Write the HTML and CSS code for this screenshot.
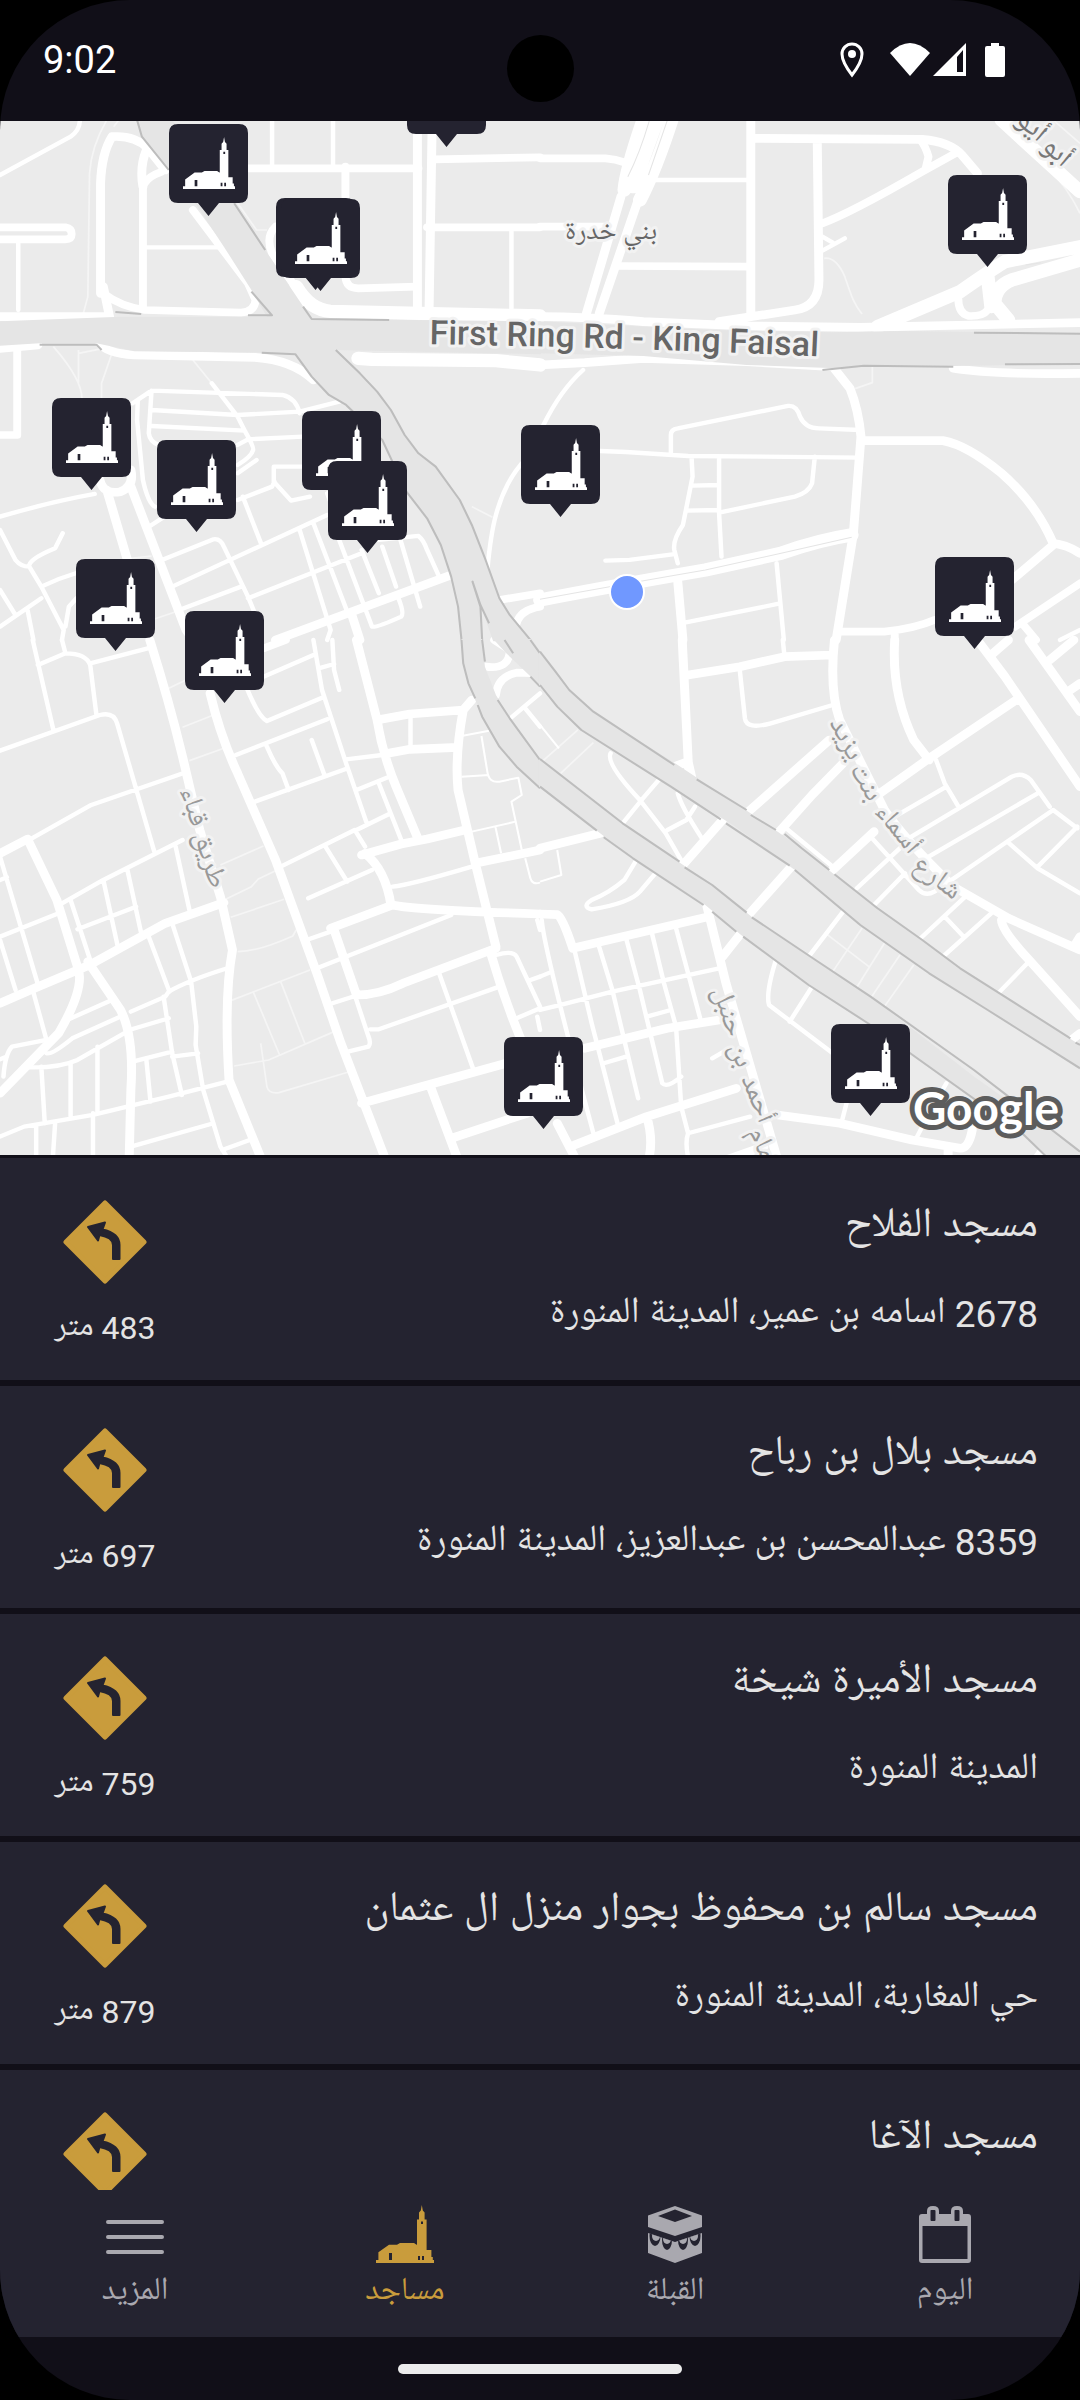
FILE: index.html
```html
<!DOCTYPE html>
<html lang="ar" dir="rtl">
<head>
<meta charset="utf-8">
<meta name="viewport" content="width=device-width, initial-scale=1">
<title>مساجد</title>
<link rel="stylesheet" href="styles.css">
</head>
<body>
<svg class="sprite" aria-hidden="true">
  <symbol id="mosque" viewBox="0 0 58 58">
    <path fill="currentColor" fill-rule="evenodd" d="M0 58V55H2.400V47.300L13 39.700H21L24 38H38L40.600 39.700H41V14.500H43V7.500L44.800 5.500L45.800 0L46.800 5.500L48.600 7.500V14.500H50.600V45H55.400V52H56.800V55H58V58ZM13 48V55H16V48ZM42 51V55H44V51ZM46 51V55H48V51ZM45 16.500V19H47V16.500Z"/>
  </symbol>
  <symbol id="turn" viewBox="0 0 84 84">
    <path class="sign" d="M42 3L81 42L42 81L3 42Z"/>
    <path class="arrow" d="M25 27L42 22.500L39.500 29.500C51 32 56.500 37 56.500 45V59H50V45C50 40 45 36.500 36.500 35L35 40.500Z"/>
  </symbol>
  <symbol id="pin" viewBox="0 0 79 92">
    <path fill="#242330" d="M9 0H70Q79 0 79 9V70Q79 79 70 79H50L39.500 92L29 79H9Q0 79 0 70V9Q0 0 9 0Z"/>
    <use href="#mosque" x="14" y="13" width="52" height="52"/>
  </symbol>
</svg>

<div class="screen">
  <header class="status" dir="ltr">
    <time class="clock">9:02</time>
    <span class="camera"></span>
    <svg class="status-icons" viewBox="0 0 166 36" aria-hidden="true">
      <path fill="none" stroke="#fff" stroke-width="3" d="M12 33Q2 20 2 12A10 10 0 0 1 22 12Q22 20 12 33Z"/>
      <circle cx="12" cy="12" r="4" fill="#fff"/>
      <path fill="#fff" d="M50 11Q70 -9 90 11L70 34Z"/>
      <path fill="#fff" fill-rule="evenodd" d="M93 34L126 1V34ZM117 15V30H123V8Z"/>
      <path fill="#fff" d="M151 1H159V4H163Q165 4 165 6V33Q165 35 163 35H147Q145 35 145 33V6Q145 4 147 4H151Z"/>
    </svg>
  </header>

  <main class="content">
    <svg class="map" viewBox="0 0 1080 1034" role="img" aria-label="خريطة المساجد">
      <rect width="1080" height="1034" fill="#ebebeb"/>

      <!-- Footpaths -->
      <g class="paths">
        <g transform="translate(0 -1) scale(.3444 .3333)">
          <path d="M310 0Q265 80 260 160L255 530L242 580M345 0L330 20M155 680Q240 780 238 840M228 690V790M325 700L295 790V840M228 700L300 685M560 720L615 790M690 250L745 330H775M1370 1160L1430 1192M440 1500L540 1465M380 1315L440 1308"/>
        </g>
        <g transform="translate(540 -1) scale(.3444 .3333)">
          <path d="M825 415Q860 410 885 470C905 530 910 550 935 582M965 740V788L915 806M1480 150Q1530 200 1568 280M1490 0L1568 70"/>
        </g>
        <g transform="translate(0 519) scale(.3444 .3333)">
          <path d="M490 145L540 120M530 262L620 225M550 362L650 325M640 675L765 618M655 778L730 740L750 717L805 690M670 832L825 778M690 935Q750 935 850 888L860 870M670 1082L900 990M735 1055L812 1245M815 1025L885 1210M680 1278L780 1260L970 1175M757 1210L775 1340Q780 1362 810 1358L1010 1297"/>
          <path class="lane" d="M1340 288L1420 272M1398 288L1415 395Q1420 430 1450 425L1505 413L1515 465L1485 485L1515 630M1340 410L1420 405M1370 575L1497 545M1438 558L1455 640M1525 655L1540 715Q1545 735 1568 728"/>
        </g>
        <g transform="translate(540 519) scale(.3444 .3333)">
          <path d="M0 370L110 270M60 400L155 308M835 885L955 980M850 995L935 865M918 1045L1000 910M960 1075L1045 945M1000 1100L1085 975"/>
          <path class="lane" d="M0 255L55 325M50 630L62 705L0 725"/>
        </g>
      </g>

      <!-- Streets -->
      <g class="roads">
        <g transform="translate(0 -1) scale(.3444 .3333)">
          <path class="s" d="M0 165L205 50Q232 30 232 0M53 360V570M790 0V140M967 0V140M1485 330V565M420 382H650M0 1190Q150 1145 275 1122M0 1230L45 1320Q60 1340 85 1340L120 1400L185 1530L180 1560M85 1335Q90 1315 160 1285L182 1240M120 1400Q170 1375 220 1360M0 1520L120 1435M0 1410L42 1480M80 1470L97 1560M190 1520L200 1460L222 1435M385 850L440 812L820 825Q860 835 870 880M440 812L432 940Q435 965 460 975M440 870L690 885L870 875L985 845M440 918L710 932M615 790L690 890L712 935Q740 985 735 990Q730 1010 690 1035M690 975L720 958L880 950M690 1060L745 1020M795 1040H880M795 1040V1085L845 1142L900 1130M430 1222L500 1175M690 1140L790 1100L797 1085M705 1130L757 1268M400 840L398 900L415 1080Q430 1150 450 1160M470 1320L620 1258Q640 1255 650 1280L720 1430L740 1480M500 1400L950 1185M520 1470L700 1400M720 1435L1050 1300M870 1230L960 1530L950 1560M910 1210L1010 1480M985 1260L1080 1520Q1090 1525 1165 1490Q1175 1480 1155 1430M1050 1290L1100 1420M1110 1280L1150 1400M1160 1250L1220 1460M950 1120L975 1190M1100 1260L1215 1248Q1230 1260 1240 1290L1275 1370M1415 1350Q1425 1240 1440 1185Q1465 1090 1515 1030"/>
          <path class="m" d="M700 145H1215M1260 118L1568 112M1240 322H1568M1003 140V230M1003 470Q1005 505 1040 505L1210 500M50 680V945H0M0 322H190Q208 325 208 342Q208 358 190 358H0M415 190V560M300 520Q350 560 420 570L700 578Q740 575 742 540L720 490L560 270M420 190Q430 170 470 155M800 320Q770 350 790 400L850 490M1450 1440L1568 1420M1500 1510Q1510 1470 1568 1460"/>
          <path class="l" d="M292 520V190Q295 100 325 50Q390 45 430 85L480 150M415 200Q405 140 425 90M1212 0V560M1255 0L1246 560M300 500L320 600M290 670Q310 700 390 705L740 712Q850 720 910 780M290 1080Q300 1125 350 1115Q390 1100 380 1050M310 1110L370 1320M380 1100L540 1530L560 1560M800 1560L1310 1365M1020 1480L1045 1560M0 590L300 590M0 685L110 675"/>
          <path class="xl" d="M860 500Q900 570 960 574L1568 588M1040 715L1080 718L1440 722L1568 735"/>
        </g>
        <g transform="translate(540 -1) scale(.3444 .3333)">
          <path class="s" d="M335 180H610M380 1000V945Q380 928 400 925L720 858Q745 855 755 890Q770 925 810 925L930 930M175 993L250 996L430 1008L930 1013M440 1010L443 1070L415 1215Q385 1260 390 1290L400 1330M520 1010V1180L527 1310M443 1097L520 1095M425 1172L520 1170M520 1178L740 1130Q780 1118 790 1090L798 1010M190 1322L260 1320L385 1303M687 1330L708 1560M420 1508L690 1452M10 915Q60 810 125 750M820 350L850 368M820 392L885 355M1510 1560L1568 1530"/>
          <path class="m" d="M0 115H190Q220 117 245 127M0 320H200M225 438L610 440M820 310Q900 280 1110 155L1215 95M1105 60Q1120 80 1128 110L1120 145M870 1535H1000Q1090 1525 1145 1500M1030 1540V1560M1215 520Q1210 580 1245 588Q1285 590 1300 570M1380 1520L1568 1390M1400 1510L1440 1560"/>
          <path class="l" d="M612 0V580M620 55L1110 58Q1190 65 1225 105L1270 160M805 60L810 480Q810 560 740 570L520 605M0 590Q130 590 300 605L600 618L930 622L1568 608M0 735L130 728L300 715L600 725L850 740M850 740L900 805Q925 870 932 950L910 1240L860 1560M935 962L1170 962Q1240 975 1340 1060Q1440 1150 1490 1270M1490 1270Q1530 1275 1568 1300M1490 1275L1370 1380M400 1385L415 1560M1200 745Q1320 765 1568 760M235 230L135 580M285 240L172 580"/>
          <path class="xl" d="M300 0Q250 150 245 210M382 0Q335 150 290 240M0 1440Q200 1400 480 1350L700 1300Q810 1260 905 1245M340 0L270 200M980 620L1220 515Q1310 450 1350 425L1568 380M1568 420L1370 480Q1320 500 1320 550L1360 600M1300 470L1310 560M1340 0L1568 215"/>
        </g>
        <g transform="translate(0 519) scale(.3444 .3333)">
          <path class="s" d="M95 0L155 270M180 0L190 40M110 75L190 40Q250 40 262 75L280 225M262 70L440 22M0 332L290 225Q330 215 340 250L448 635M90 597L265 495L540 397M180 790L300 720L530 600M300 720L342 920M370 690L410 880M225 868L395 800M510 620L550 810M0 720L20 712M0 650L112 1040M0 890L165 822M0 900L45 1050M205 780L265 970M500 850L555 1025L570 1160L568 1215L590 1350L640 1520L655 1545M430 885L492 1055M195 1140L325 1080M380 1115L480 1070L490 1055Q550 1020 660 985M475 1070L500 1240L528 1365M375 1170L490 1135M385 1265L500 1235M500 1250L575 1240M425 1260L437 1385M0 1490L70 1460L270 1425L490 1370L660 1325M95 1050L135 1200L35 1220Q15 1240 10 1310M0 1258L20 1250M135 1240Q150 1245 210 1195L360 1125M80 1282Q170 1285 225 1260L360 1180M120 1280L130 1450M205 1270V1430M283 1220V1420M105 1455V1560M160 1450L153 1560M270 1420V1560M380 1520L620 1450M645 1530L725 1500M715 140Q750 230 775 243L935 173M765 110L910 45M910 0L935 150L1005 370L1065 550M965 0L970 90L985 150M925 85L970 72M685 345L950 238M740 485L1010 385M775 320Q800 380 820 400L838 450M905 300L942 405M1005 358L1110 345M1035 450L1130 410M1100 430L1165 600M1035 570L1130 522M815 680L1030 570L1060 620M945 620L1008 725M895 775L1080 690M890 900L960 875M920 985L1310 825M965 1090L1040 1065M1010 1235L1070 1220Q1078 1210 1070 1190L1030 1065M1075 1168H1100L1450 1040M1275 1000L1375 1290M1192 230V320M1140 740Q1190 735 1370 680M1440 945Q1490 930 1500 950L1568 1100M1500 1135L1568 1105M1540 1020L1568 1010M1560 1130L1568 1170M1560 840L1568 870M1485 232L1568 160M1525 205L1568 260"/>
          <path class="l" d="M435 0Q490 180 530 350L580 570L640 770L675 930Q650 1070 665 1320L760 1560M0 640L80 597L165 780L225 980Q250 1040 170 1180L0 1360M0 1090L100 1045L260 975L480 850L650 788M255 965L350 1110Q390 1190 380 1350L375 1560M610 160Q640 290 690 400L800 660L920 1000L990 1210L1120 1560M1035 0L1095 240Q1110 340 1150 440L1215 600M1095 240L1190 222L1345 210L1370 180M1345 210Q1320 350 1330 450L1380 670L1440 920L1425 940M1115 342L1190 328L1330 322M1050 645L1165 612L1240 597L1350 570M1060 640Q1120 690 1135 795M960 865L1140 795Q1200 810 1568 822M970 870L1035 1065Q1100 1065 1170 1030L1440 925M1425 940Q1470 1100 1530 1240M1050 1390L1470 1270M1250 1340L1330 1560M1310 1495L1530 1420M1380 670L1568 630"/>
          <path class="m" d="M1440 165Q1445 110 1500 98L1568 100M1435 0L1480 30Q1480 90 1410 80M765 25L830 0M1520 0L1568 50"/>
        </g>
        <g transform="translate(540 519) scale(.3444 .3333)">
          <path class="s" d="M705 0L710 50M580 90L595 235Q600 270 670 250L850 195M205 340Q190 370 290 480L365 580L415 670M240 550L295 480L345 420M400 460Q410 500 470 595M370 570L425 540L450 500M280 660L245 720Q200 760 150 780Q120 800 150 808Q260 790 290 755L335 700M715 565L850 680M920 745L1050 620M970 795L1060 700M1105 895L1235 770M1170 950L1310 820M1175 830L1230 890M960 590L1100 750Q1120 770 1145 755L1490 510L1560 565M1030 530L1180 440M1150 360L1175 430L1215 500M1070 595L1370 410Q1400 395 1425 420L1480 500M1120 655L1445 460M1445 680L1560 560M1360 608L1445 685L1568 760M1335 1055L1415 970M685 960Q655 1060 665 1095L850 1240M725 1145L790 1040M780 950L880 815M875 1450L890 1390M1095 1490L1130 1420L1180 1330M0 1110L60 1095L210 1055L520 985M0 1010L35 995M5 840Q10 920 155 1480M100 930L150 1150L225 1450M170 915L210 1050L285 1375M250 895L290 1050L355 1330Q370 1345 410 1310M325 880L360 1030L395 1160L410 1400L430 1480M395 865L465 1135M310 1130L380 1110M185 1270L250 1250M500 1255L550 1225M430 1480L610 1430M430 1480Q420 1510 432 1560"/>
          <path class="l" d="M413 0L432 400M430 105L580 80L710 50L850 45M855 0Q840 150 870 240L1000 510Q1060 600 1200 740L1360 835L1568 930M1030 0Q1020 160 1085 300L1130 360M980 465L1130 355L1390 175M605 515L840 300M695 575L790 465L880 370M845 695L970 575M530 540L415 675M730 680L605 825M1270 0L1350 110L1568 440M1310 45L1360 0M1420 0L1568 215M1480 60L1550 0M1540 150L1568 130M1340 840Q1340 870 1420 960L1568 1130M1550 920L1568 890M0 625L175 580M0 822L50 824Q65 830 95 925L490 830M485 800L540 1030L690 1560M530 950L580 885M130 1225L370 1165L520 1140M50 1450L100 1550M100 1515L310 1430L570 1345M310 1430Q330 1500 315 1560M690 1425L870 1450L1080 1500L1220 1525Q1245 1525 1255 1470M540 1560L650 1520M1530 1210L1568 1180M390 380L430 365L440 410M1440 1560L1460 1530M1185 1530V1560"/>
        </g>
      </g>

      <!-- Highways -->
      <g class="highways">
        <g transform="translate(0 -1) scale(.3444 .3333)">
          <path class="fill" d="M398 -10L412 50L490 150L570 255L650 380L730 510L775 590H350L0 604V677L115 670H280L390 694L760 698L858 703L905 770L955 825L1005 855L1110 960L1180 1115L1240 1195L1280 1275L1310 1370L1330 1460L1340 1564H1400L1395 1460L1372 1385L1395 1455L1432 1564H1544L1480 1485L1450 1435L1410 1320L1370 1215L1335 1140L1265 1040L1215 1000L1175 945L1135 870L1095 815L1045 760L975 690L1570 703V604L905 597L770 390L680 250L500 0Z"/>
          <path class="edge" d="M398 0L412 50L490 150M335 576L410 582M720 586H790L730 515M115 674H280L295 690M760 698L858 703L905 770L955 825L1005 855L1110 960L1180 1115L1240 1195L1280 1275L1310 1370L1330 1460L1340 1560M1400 1560L1395 1460L1372 1385L1395 1455L1420 1510M1540 1560L1480 1485L1450 1435L1410 1320L1370 1215L1335 1140L1265 1040L1215 1000L1175 945L1135 870L1095 815L1045 760L975 690M680 250L770 390M880 560L905 597L1130 600"/>
        </g>
        <g transform="translate(540 -1) scale(.3444 .3333)">
          <path class="fill" d="M-4 604L500 630L850 637L1050 633L1570 640V732L1200 738L940 735L860 745L600 735L300 708L-4 700Z"/>
          <path class="edge" d="M1260 638L1568 641M820 750L940 737L1200 740M1350 733L1568 732"/>
          <path class="median" d="M318 0Q290 100 255 170M370 0L315 165M0 1438Q200 1400 480 1350L700 1300L905 1252M1410 435L1455 428"/>
        </g>
        <g transform="translate(0 519) scale(.3444 .3333)">
          <path class="fill" d="M1340 -3L1345 70L1360 130L1400 230L1450 320L1500 380L1572 445V360L1480 235L1440 165L1408 80L1400 -3ZM1432 -3L1470 40L1572 140V40L1544 -3Z"/>
          <path class="edge" d="M1340 0L1345 70L1360 130L1380 175M1387 195L1400 230L1450 320L1500 380L1568 445M1400 0L1408 65M1445 180L1480 235L1568 360M1465 0L1490 40M1540 110L1568 140M1540 0L1568 40"/>
        </g>
        <g transform="translate(540 519) scale(.3444 .3333)">
          <path class="fill" d="M-3 440L165 572L270 655L480 795L590 890L780 1035L960 1155L1400 1480L1490 1570H1600L1568 1535L1260 1310L960 1070L800 960L620 835L500 735L240 550L-3 357ZM-3 35L45 95L85 150L155 215L400 375L605 515L760 625L850 700L980 805L1110 900L1220 985L1568 1215V1285L1300 1110L1130 1000L930 855L740 690L560 555L380 440L120 270L50 200L-3 135Z"/>
          <path class="edge" d="M0 440L165 572M185 592L270 655L475 795M500 815L570 875M590 890L780 1035L960 1155L1400 1480L1480 1560M0 357L240 550L405 665M420 682L500 735L600 818M615 832L800 960L960 1070L1260 1290L1568 1535M0 35L45 95L85 150L155 215L390 375M455 418L600 510M612 525L685 570M710 582L760 625L840 690M855 703L980 805L1110 900L1220 985L1540 1195M1555 1208L1568 1215M1568 1285L1300 1110L1130 1000L930 855L740 690M725 677L540 550M525 538L380 440L120 270L50 200L0 135"/>
        </g>
      </g>

      <!-- Place and street names -->
      <defs>
        <path id="ring" d="M419 223Q619 226 829 236"/>
      </defs>
      <g class="labels">
        <text class="highway-name" direction="ltr"><textPath href="#ring" startOffset="50%">First Ring Rd - King Faisal</textPath></text>
        <text class="district" x="611" y="122">بني خدرة</text>
        <g class="street strong">
          <text transform="translate(1049 40) rotate(42)">أبو</text>
          <text transform="translate(1015 6) rotate(42)">أيوب</text>
        </g>
        <g class="street">
          <text transform="translate(192 720) rotate(73)">طريق قباء</text>
        </g>
        <g class="street">
          <text transform="translate(930 766) rotate(38)">شارع</text>
          <text transform="translate(889 715) rotate(51)">أسماء</text>
          <text transform="translate(856 667) rotate(60)">بنت</text>
          <text transform="translate(836 623) rotate(63)">يزيد</text>
        </g>
        <g class="street">
          <text transform="translate(756 1037) rotate(66)">الإمام</text>
          <text transform="translate(747 982) rotate(68)">أحمد</text>
          <text transform="translate(730 938) rotate(70)">بن</text>
          <text transform="translate(717 894) rotate(72)">حنبل</text>
        </g>
      </g>

      <!-- Mosque pins -->
      <g class="pins">
        <use href="#pin" x="169" y="3" width="79" height="92"/>
        <use href="#pin" x="276" y="77" width="79" height="92"/>
        <use href="#pin" x="281" y="78" width="79" height="92"/>
        <use href="#pin" x="407" y="-66" width="79" height="92"/>
        <use href="#pin" x="948" y="54" width="79" height="92"/>
        <use href="#pin" x="52" y="277" width="79" height="92"/>
        <use href="#pin" x="157" y="319" width="79" height="92"/>
        <use href="#pin" x="302" y="290" width="79" height="92"/>
        <use href="#pin" x="328" y="340" width="79" height="92"/>
        <use href="#pin" x="521" y="304" width="79" height="92"/>
        <use href="#pin" x="935" y="436" width="79" height="92"/>
        <use href="#pin" x="76" y="438" width="79" height="92"/>
        <use href="#pin" x="185" y="490" width="79" height="92"/>
        <use href="#pin" x="504" y="916" width="79" height="92"/>
        <use href="#pin" x="831" y="903" width="79" height="92"/>
      </g>
      <circle cx="627" cy="471" r="17" fill="#7098ff" stroke="#fff" stroke-width="2"/>
      <text class="google" direction="ltr" x="986" y="1004">Google</text>
    </svg>

    <ul class="list">
      <li class="row">
        <div class="info"><h2 class="name">مسجد الفلاح</h2><p class="address"><span class="num">2678 </span>اسامه بن عمير، المدينة المنورة</p></div>
        <a class="directions" href="#m1"><svg class="turn" aria-hidden="true"><use href="#turn"/></svg><span class="distance"><span class="num">483 </span>متر</span></a>
      </li>
      <li class="row">
        <div class="info"><h2 class="name">مسجد بلال بن رباح</h2><p class="address"><span class="num">8359 </span>عبدالمحسن بن عبدالعزيز، المدينة المنورة</p></div>
        <a class="directions" href="#m2"><svg class="turn" aria-hidden="true"><use href="#turn"/></svg><span class="distance"><span class="num">697 </span>متر</span></a>
      </li>
      <li class="row">
        <div class="info"><h2 class="name">مسجد الأميرة شيخة</h2><p class="address">المدينة المنورة</p></div>
        <a class="directions" href="#m3"><svg class="turn" aria-hidden="true"><use href="#turn"/></svg><span class="distance"><span class="num">759 </span>متر</span></a>
      </li>
      <li class="row">
        <div class="info"><h2 class="name">مسجد سالم بن محفوظ بجوار منزل ال عثمان</h2><p class="address">حي المغاربة، المدينة المنورة</p></div>
        <a class="directions" href="#m4"><svg class="turn" aria-hidden="true"><use href="#turn"/></svg><span class="distance"><span class="num">879 </span>متر</span></a>
      </li>
      <li class="row">
        <div class="info"><h2 class="name">مسجد الآغا</h2></div>
        <a class="directions" href="#m5" aria-label="الاتجاهات"><svg class="turn" aria-hidden="true"><use href="#turn"/></svg></a>
      </li>
    </ul>
  </main>

  <nav class="tabs">
    <a class="tab" href="#today">
      <svg class="tab-icon" viewBox="0 0 58 58" aria-hidden="true"><path fill="currentColor" fill-rule="evenodd" d="M6 9H11V6Q11 1 17 1Q23 1 23 6V9H35V6Q35 1 41 1Q47 1 47 6V9H52Q55 9 55 12V55Q55 58 52 58H6Q3 58 3 55V12Q3 9 6 9ZM6.500 21V54H51.500V21ZM15 5Q14.500 5 14.500 6V15Q14.500 16 15.500 16H18.500Q19.500 16 19.500 15V6Q19.500 5 18.500 5ZM39 5Q38.500 5 38.500 6V15Q38.500 16 39.500 16H42.500Q43.500 16 43.500 15V6Q43.500 5 42.500 5Z"/></svg>
      <span>اليوم</span>
    </a>
    <a class="tab" href="#qibla">
      <svg class="tab-icon" viewBox="0 0 58 58" aria-hidden="true">
        <clipPath id="cloth"><path d="M2 28L29 37L56 28V48L29 58L2 48Z"/></clipPath>
        <path fill="currentColor" fill-rule="evenodd" d="M29 1L56 10.500V22L29 31L2 22V10.500ZM29 4.500L12 11L29 17L46 11Z"/>
        <g clip-path="url(#cloth)">
          <path fill="currentColor" d="M0 26H58V58H0Z"/>
          <g fill="#242330"><ellipse cx="9" cy="31" rx="5.500" ry="10"/><ellipse cx="21" cy="35" rx="5" ry="10"/><ellipse cx="37" cy="35" rx="5" ry="10"/><ellipse cx="49" cy="31" rx="5.500" ry="10"/></g>
          <g fill="currentColor"><ellipse cx="10" cy="31" rx="4" ry="5"/><ellipse cx="21" cy="34" rx="4" ry="5"/><ellipse cx="37" cy="34" rx="4" ry="5"/><ellipse cx="48" cy="31" rx="4" ry="5"/></g>
        </g>
      </svg>
      <span>القبلة</span>
    </a>
    <a class="tab active" href="#mosques" aria-current="page">
      <svg class="tab-icon" aria-hidden="true"><use href="#mosque"/></svg>
      <span>مساجد</span>
    </a>
    <a class="tab" href="#more">
      <svg class="tab-icon" viewBox="0 0 58 58" aria-hidden="true"><path fill="none" stroke="currentColor" stroke-width="4" stroke-linecap="round" d="M2 17H56M2 32H56M2 47H56"/></svg>
      <span>المزيد</span>
    </a>
  </nav>
  <footer class="gesture"><span class="handle"></span></footer>
</div>
</body>
</html>
```
FILE: styles.css
```css
* {
  box-sizing: border-box;
  margin: 0;
  padding: 0;
}

body {
  background: #000;
  color: #e4e4e4;
  font-family: Lato, "Noto Naskh Arabic UI", "Noto Naskh Arabic", "Noto Sans Arabic", "DejaVu Sans", sans-serif;
}

a {
  color: inherit;
  text-decoration: none;
}

.sprite {
  position: absolute;
  width: 0;
  height: 0;
}

.screen {
  display: flex;
  flex-direction: column;
  height: 100vh;
  overflow: hidden;
  border-radius: 130px;
  background: #110f18;
}

/* Status bar */
.status {
  display: grid;
  grid-template-columns: 1fr auto 1fr;
  align-items: start;
  flex: none;
  padding: 35px 74px 19px 43px;
}

.clock {
  color: #fff;
  font-family: Roboto, sans-serif;
  font-size: 38px;
  line-height: 50px;
}

.camera {
  width: 67px;
  height: 67px;
  margin-left: 31px;
  border-radius: 50%;
  background: #000;
}

.status-icons {
  justify-self: end;
  width: 166px;
  height: 36px;
  margin-top: 7px;
}

/* Map */
.content {
  display: flex;
  flex: 1;
  flex-direction: column;
  gap: 3px;
  min-height: 0;
}

.map {
  flex: none;
  width: 100%;
  aspect-ratio: 1080 / 1034;
  overflow: hidden;
}

.roads, .paths, .edge, .median {
  fill: none;
  stroke: #fff;
  stroke-linejoin: round;
}

.roads { stroke-linecap: round; }
.paths { stroke: #f5f5f5; stroke-width: 5; }
.lane { stroke: #fff; stroke-width: 6; }
.s { stroke-width: 13; }
.m { stroke-width: 23; }
.l { stroke-width: 26; }
.xl { stroke-width: 40; }
.highways .fill { fill: #e5e5e5; }
.edge { stroke: #bdbdbd; stroke-width: 6; }
.median { stroke: #e5e5e5; stroke-width: 3; }
.pins { color: #fff; }

.labels {
  fill: #666;
  stroke: #f2f2f2;
  stroke-width: 6px;
  stroke-linejoin: round;
  paint-order: stroke;
  text-anchor: middle;
}

.highway-name {
  font-family: Roboto, sans-serif;
  font-size: 34px;
  font-weight: 500;
}

.district { font-size: 27px; }
.street { fill: #999; font-size: 28px; }
.street.strong { fill: #777; font-size: 31px; }

.google {
  fill: #fff;
  stroke: #5c5c5c;
  stroke-width: 10px;
  stroke-linejoin: round;
  paint-order: stroke;
  font-family: Lato, sans-serif;
  font-size: 46px;
  font-weight: 700;
  text-anchor: middle;
}

/* Mosque list */
.list {
  display: flex;
  flex: 1;
  flex-direction: column;
  gap: 6px;
  min-height: 0;
  overflow-y: auto;
  list-style: none;
  scrollbar-width: none;
}

.row {
  display: flex;
  flex: none;
  justify-content: space-between;
  min-height: 222px;
  padding: 42px 42px 0;
  background: #242330;
}

.info {
  display: flex;
  flex-direction: column;
  gap: 35px;
}

.name {
  font-size: 42px;
  font-weight: 400;
  line-height: 52px;
}

.address {
  font-size: 37px;
  line-height: 52px;
}

.num {
  font-family: Roboto, sans-serif;
  line-height: 1;
}

.directions {
  display: flex;
  flex-direction: column;
  align-items: center;
  gap: 22px;
  width: 126px;
}

.turn {
  width: 84px;
  height: 84px;
}

.sign {
  fill: #c99c3c;
  stroke: #c99c3c;
  stroke-width: 5;
  stroke-linejoin: round;
}

.arrow {
  fill: #242330;
  stroke: #242330;
  stroke-width: 2;
  stroke-linejoin: round;
}

.distance {
  font-size: 32px;
  line-height: 42px;
  white-space: nowrap;
}

/* Bottom tabs */
.tabs {
  display: grid;
  grid-template-columns: repeat(4, 1fr);
  flex: none;
  padding: 15px 0 28px;
  background: #242330;
}

.tab {
  display: flex;
  flex-direction: column;
  align-items: center;
  gap: 10px;
  color: #a9a8af;
  font-size: 32px;
  line-height: 36px;
}

.tab.active { color: #c99c3c; }

.tab-icon {
  width: 58px;
  height: 58px;
}

.gesture {
  display: flex;
  flex: none;
  justify-content: center;
  padding: 27px 0 26px;
}

.handle {
  width: 284px;
  height: 10px;
  border-radius: 5px;
  background: #ececec;
}
```
